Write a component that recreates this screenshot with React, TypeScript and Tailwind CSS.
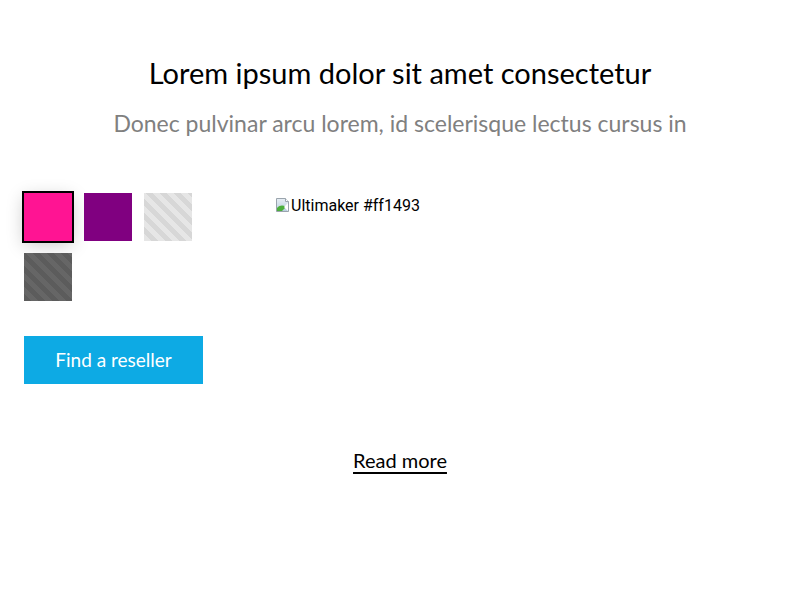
import React from "react";

const swatches = [
  { name: "Magenta", cls: "bg-[#ff1493]", active: true },
  { name: "Purple", cls: "bg-[#800080]" },
  { name: "Silver", cls: "bg-[repeating-linear-gradient(45deg,#e6e6e6_0px,#e6e6e6_5px,#d7d7d7_5px,#d7d7d7_10px)]" },
  { name: "Grey", cls: "bg-[repeating-linear-gradient(45deg,#5c5c5c_0px,#5c5c5c_5px,#666666_5px,#666666_10px)]" },
];

function BrokenImage() {
  return (
    <svg width="16" height="16" viewBox="0 0 16 16" className="shrink-0 mt-[1px]">
      <defs>
        <linearGradient id="sky" x1="0" y1="0" x2="0" y2="1">
          <stop offset="0" stopColor="#e8eef4" />
          <stop offset="1" stopColor="#b8cfe0" />
        </linearGradient>
      </defs>
      <path d="M1.5 1.5 H10.5 L13.5 4.5 V14.5 H1.5 Z" fill="url(#sky)" stroke="#9aa4ad" strokeWidth="1" />
      <path d="M10.5 1.5 V4.5 H13.5" fill="#fff" stroke="#9aa4ad" strokeWidth="1" />
      <path d="M2 14 L2 11 C5 8 8 8 11 10 L7 14 Z" fill="#4caf3c" />
      <path d="M13 6 L9 10 L13 14 Z" fill="#fff" />
    </svg>
  );
}

export default function App() {
  return (
    <div className="min-h-screen bg-white font-['Lato',sans-serif] pt-[55px] px-6">
      {/* heading */}
      <div className="text-center">
        <h1 className="text-[29px] leading-9 text-black">Lorem ipsum dolor sit amet consectetur</h1>
        <p className="mt-4 text-[23px] leading-[32px] text-[#808080]">
          Donec pulvinar arcu lorem, id scelerisque lectus cursus in
        </p>
      </div>

      {/* product */}
      <div className="mt-[54px] flex">
        <div className="w-[251px] shrink-0">
          <div className="grid grid-cols-[repeat(3,48px)] gap-3">
            {swatches.map(s => (
              <button
                key={s.name}
                title={s.name}
                className={`w-12 h-12 ${s.cls} ${s.active ? "outline-2 outline-black shadow-[0_4px_18px_rgba(0,0,0,0.22)]" : ""}`}
              />
            ))}
          </div>
          <button className="mt-[35px] w-[179px] h-12 bg-[#0daae4] text-white text-[19px]">Find a reseller</button>
        </div>
        <div className="flex items-start pt-[3px] font-['Roboto',sans-serif] text-[16px] leading-5 text-black">
          <BrokenImage />
          <span>Ultimaker #ff1493</span>
        </div>
      </div>

      <div className="mt-[61px] text-center">
        <a href="#" className="text-[20px] text-black underline decoration-2 underline-offset-4">Read more</a>
      </div>
    </div>
  );
}
